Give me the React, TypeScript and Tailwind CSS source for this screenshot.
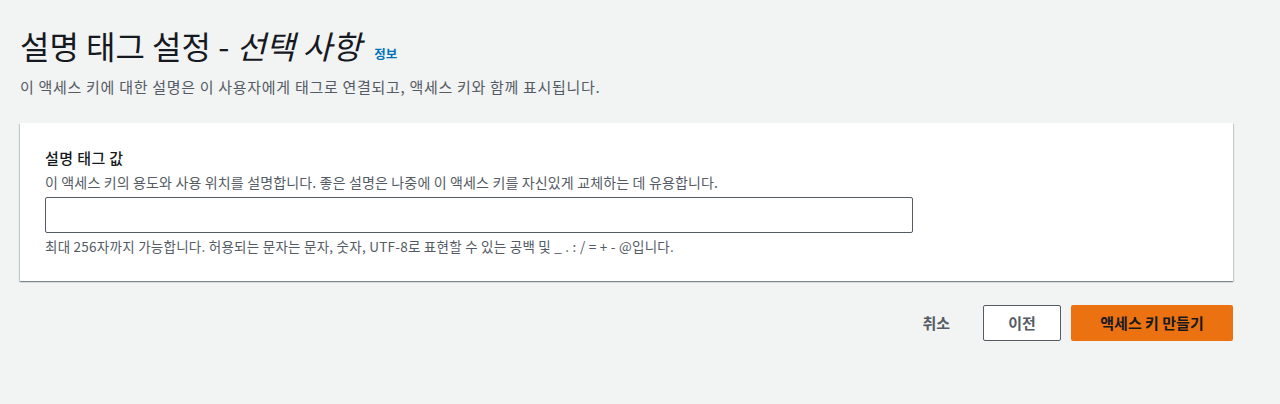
export default function App() {
  return (
    <div
      className="min-h-[404px] w-[1280px] bg-[#f2f3f3] px-5 pt-[24px] text-[#16191f]"
      style={{ fontFamily: '"Noto Sans CJK KR", "Noto Sans", sans-serif' }}
    >
      <div className="flex items-baseline gap-[13px]">
        <h1 className="text-[32px] font-normal leading-[42px]">
          설명 태그 설정 - <i>선택 사항</i>
        </h1>
        <a className="text-[12.5px] font-bold text-[#0073bb]">정보</a>
      </div>
      <p className="mt-[11px] text-[15px] leading-5 tracking-[0.7px] text-[#545b64]">
        이 액세스 키에 대한 설명은 이 사용자에게 태그로 연결되고, 액세스 키와 함께 표시됩니다.
      </p>

      <div className="mt-[26px] w-[1213px] bg-white px-[25px] pb-[26px] pt-[25px] shadow-[0_1px_1px_0_rgba(0,28,36,0.3),1px_1px_1px_0_rgba(0,28,36,0.15),-1px_1px_1px_0_rgba(0,28,36,0.15)]">
        <label className="block text-[15px] font-medium leading-5 tracking-[0.4px] text-[#16191f]">설명 태그 값</label>
        <p className="mt-[4px] text-[14px] leading-5 tracking-[0.15px] text-[#545b64]">
          이 액세스 키의 용도와 사용 위치를 설명합니다. 좋은 설명은 나중에 이 액세스 키를 자신있게 교체하는 데 유용합니다.
        </p>
        <input
          className="mt-[5px] block h-[36px] w-[868px] rounded-[2px] border border-[#545b64] bg-white px-2 text-sm outline-none"
          type="text"
        />
        <p className="mt-[4px] text-[13.5px] leading-[18px] tracking-[0.25px] text-[#545b64]">
          최대 256자까지 가능합니다. 허용되는 문자는 문자, 숫자, UTF-8로 표현할 수 있는 공백 및 _ . : / = + - @입니다.
        </p>
      </div>

      <div className="mt-[24px] flex w-[1213px] items-center justify-end">
        <button className="px-5 text-[15px] font-bold text-[#545b64]">취소</button>
        <button className="ml-[13px] h-[36px] w-[78px] rounded-[2px] border border-[#545b64] bg-white text-[15px] font-bold text-[#545b64]">
          이전
        </button>
        <button className="ml-[10px] h-[36px] w-[162px] rounded-[2px] bg-[#ec7211] text-[15px] font-bold text-[#16191f]">
          액세스 키 만들기
        </button>
      </div>
    </div>
  );
}
